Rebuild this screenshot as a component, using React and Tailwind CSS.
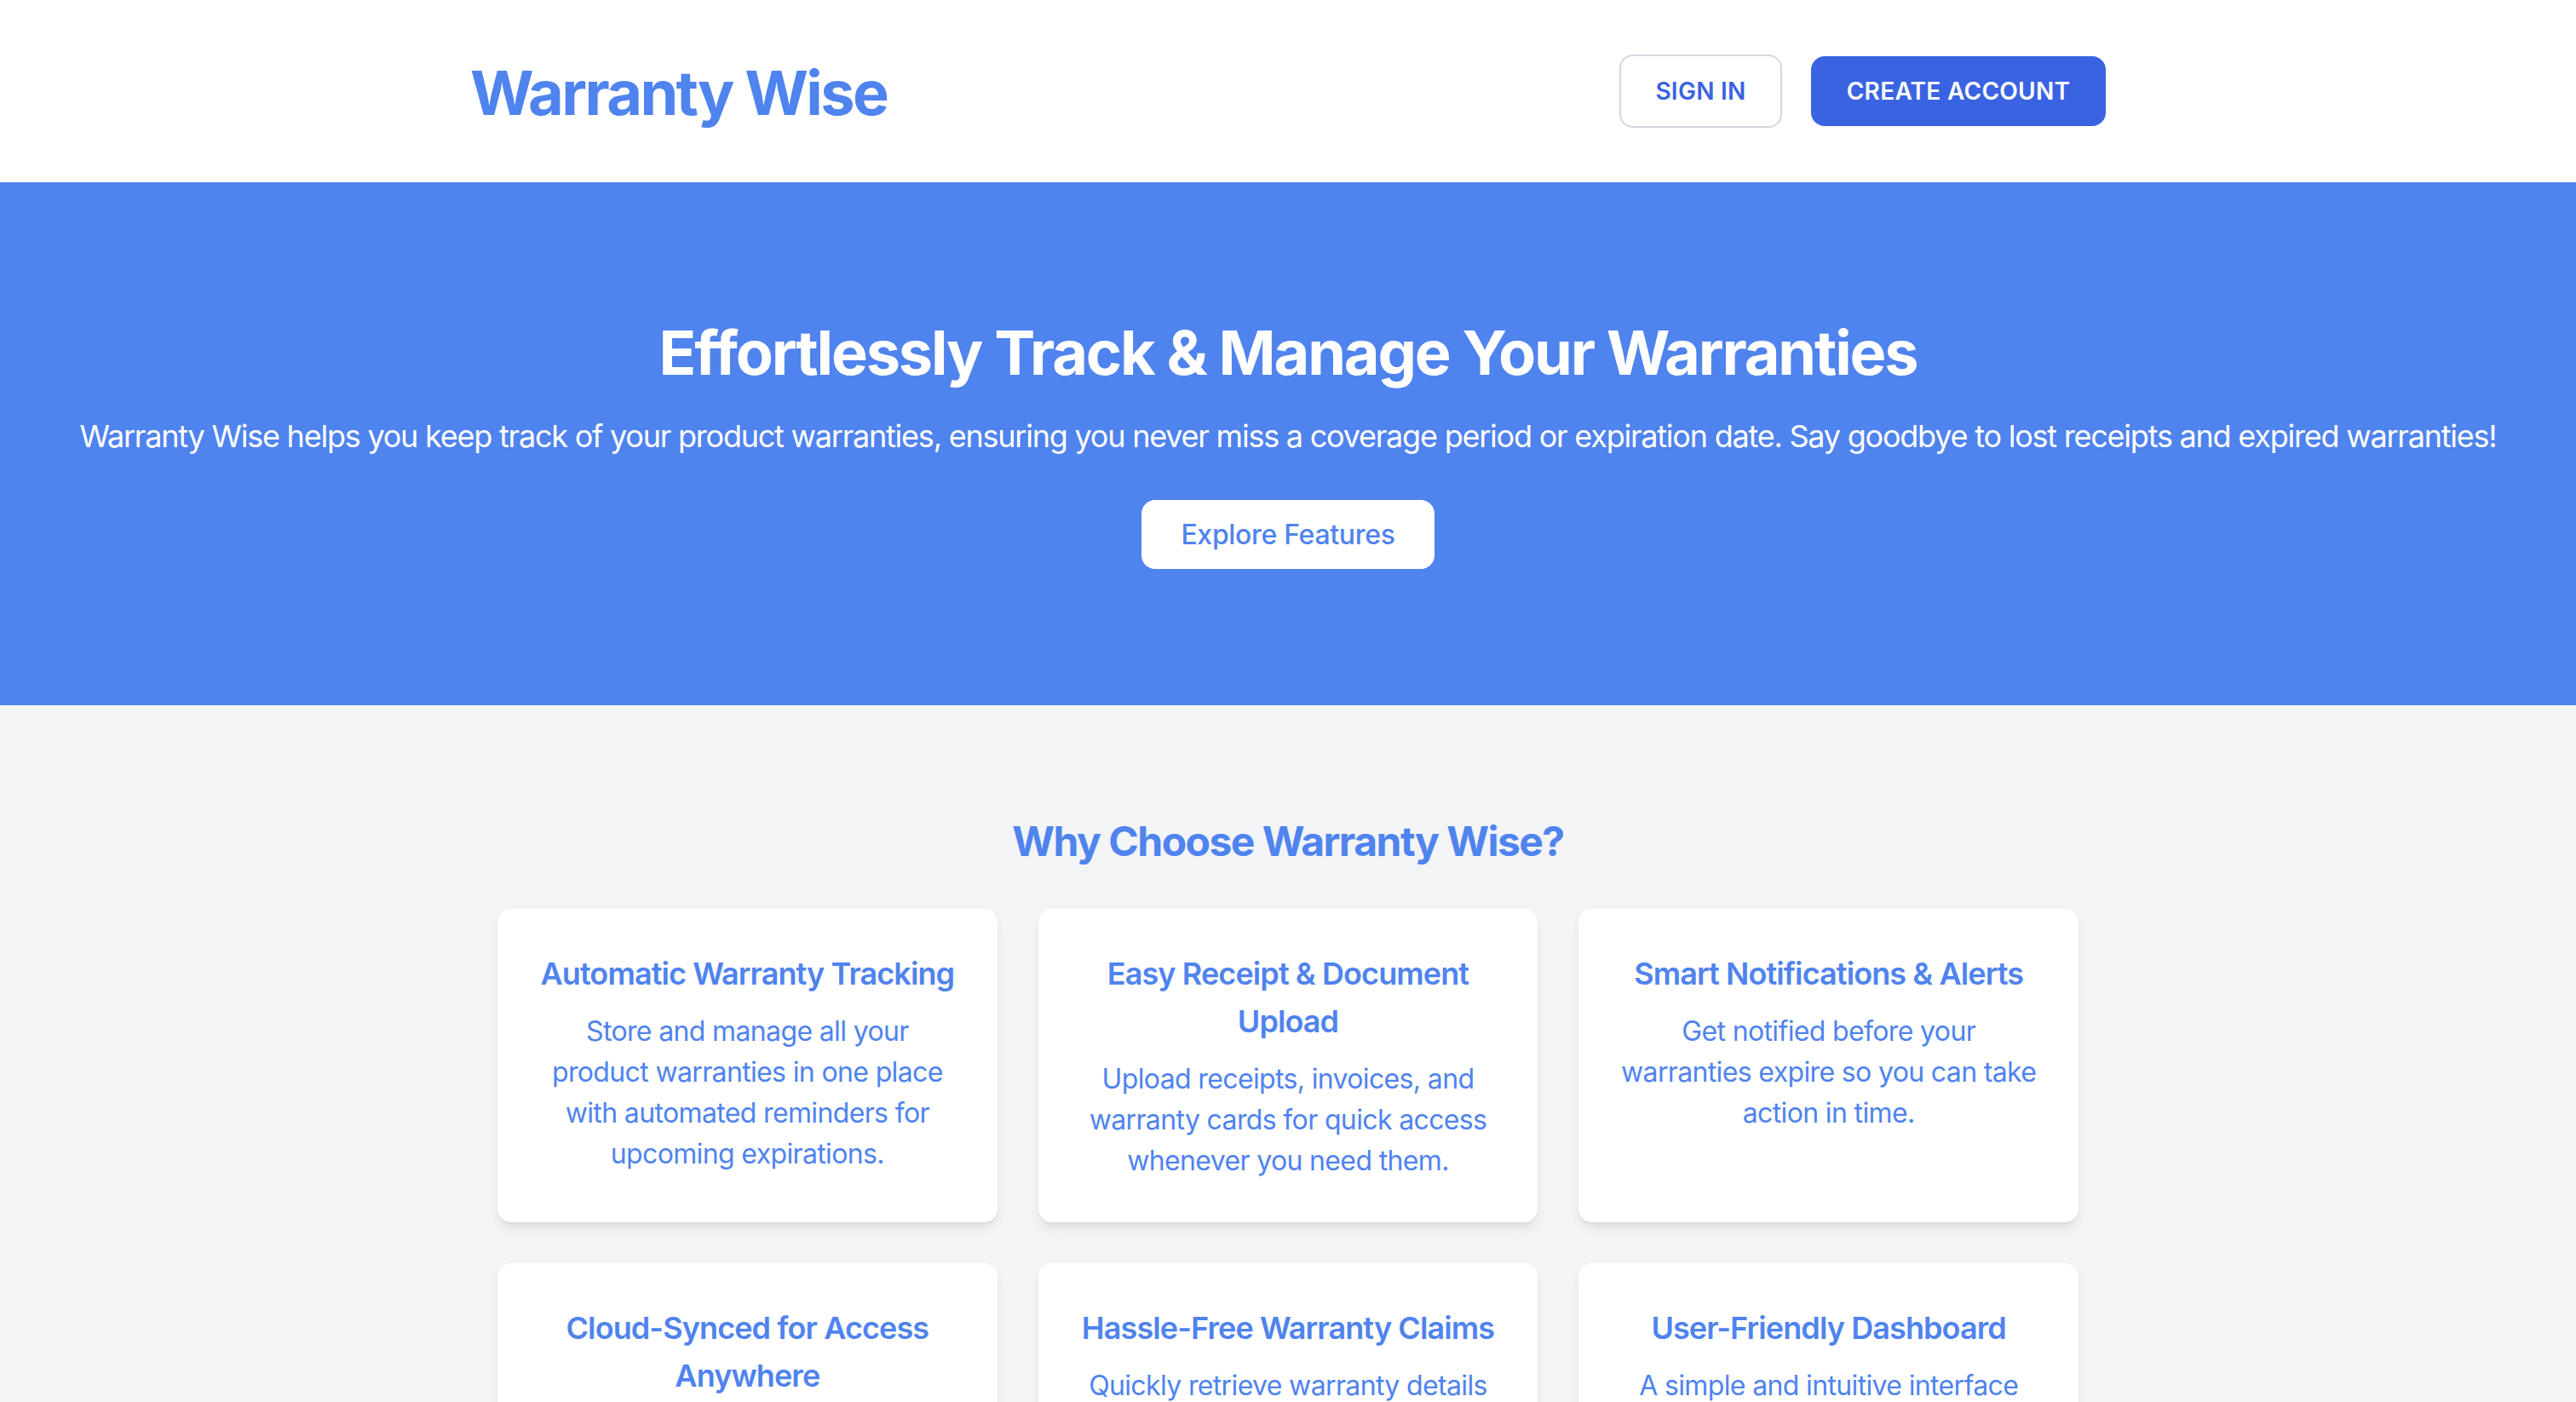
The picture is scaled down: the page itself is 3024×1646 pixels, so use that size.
const features = [
  {
    title: 'Automatic Warranty Tracking',
    text: 'Store and manage all your product warranties in one place with automated reminders for upcoming expirations.',
  },
  {
    title: 'Easy Receipt & Document Upload',
    text: 'Upload receipts, invoices, and warranty cards for quick access whenever you need them.',
  },
  {
    title: 'Smart Notifications & Alerts',
    text: 'Get notified before your warranties expire so you can take action in time.',
  },
  {
    title: 'Cloud-Synced for Access Anywhere',
    text: 'Access your warranty information from any device, anytime, with secure cloud storage.',
  },
  {
    title: 'Hassle-Free Warranty Claims',
    text: 'Quickly retrieve warranty details and documents to make claims faster and easier.',
  },
  {
    title: 'User-Friendly Dashboard',
    text: 'A simple and intuitive interface designed to make managing warranties effortless.',
  },
]

export default function App() {
  return (
    <div className="min-h-screen bg-[#f3f4f6] font-['Inter','Liberation_Sans',sans-serif]">
      <header className="bg-white">
        <div className="mx-auto flex h-[214px] max-w-[2048px] items-center justify-between px-16">
          <h1 className="mt-[4px] text-[72px] font-bold tracking-[-0.036em] text-[#4f83ee]">Warranty Wise</h1>
          <div className="flex items-center gap-[34px]">
            <button className="h-[86px] w-[191px] rounded-2xl border-2 border-[#d5d8de] bg-white text-[28px] font-semibold uppercase tracking-[0.01em] text-[#3a63e2]">
              Sign In
            </button>
            <button className="h-[82px] w-[346px] rounded-2xl bg-[#3a63e2] text-[28px] font-semibold uppercase tracking-[0.01em] text-white">
              Create Account
            </button>
          </div>
        </div>
      </header>

      <section className="bg-[#4f83ee] py-[160px] text-center text-white">
        <h2 className="text-[72px] font-bold leading-[80px] tracking-[-0.03em]">
          Effortlessly Track &amp; Manage Your Warranties
        </h2>
        <p className="mt-[30px] whitespace-nowrap text-[36px] leading-[56px] tracking-[-0.034em]">
          Warranty Wise helps you keep track of your product warranties, ensuring you never miss a coverage period or expiration date. Say goodbye to lost receipts and expired warranties!
        </p>
        <button className="mt-[47px] h-[81px] w-[344px] rounded-2xl bg-white text-[32px] font-medium tracking-[-0.01em] text-[#4f83ee]">
          Explore Features
        </button>
      </section>

      <section className="py-[128px]">
        <h2 className="text-center text-[48px] font-bold leading-[64px] tracking-[-0.032em] text-[#4f83ee]">
          Why Choose Warranty Wise?
        </h2>
        <div className="mx-auto mt-[47px] grid w-[1856px] grid-cols-3 gap-[48px]">
          {features.map((f) => (
            <div
              key={f.title}
              className="rounded-2xl bg-white px-[44px] py-[48px] text-center text-[#4f83ee] shadow-[0_8px_14px_-4px_rgba(0,0,0,0.12),0_3px_6px_-3px_rgba(0,0,0,0.08)]"
            >
              <h3 className="text-[36px] font-semibold leading-[56px] tracking-[-0.025em]">{f.title}</h3>
              <p className="mt-[16px] px-[4px] text-[32px] leading-[48px] tracking-[-0.02em]">{f.text}</p>
            </div>
          ))}
        </div>
      </section>
    </div>
  )
}
